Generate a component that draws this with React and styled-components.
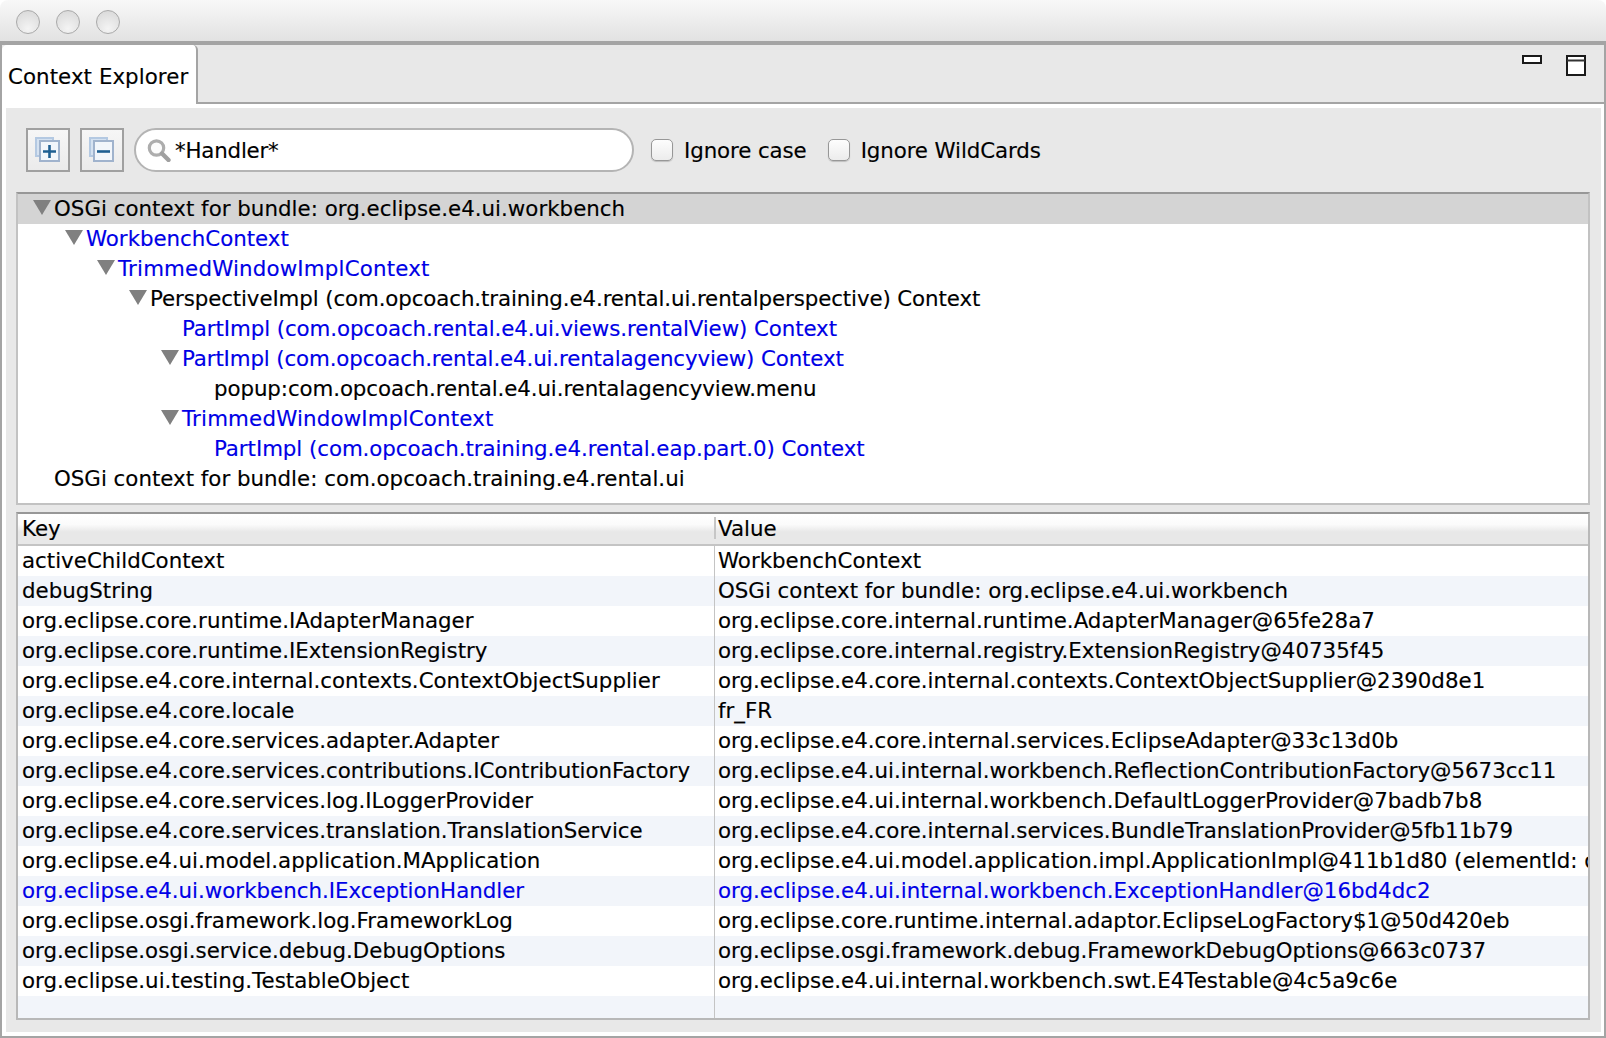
import React from 'react';
import styled, { createGlobalStyle } from 'styled-components';

const GlobalStyle = createGlobalStyle`
  html, body {
    margin: 0;
    padding: 0;
    background: #ffffff;
  }
  body {
    font-family: "DejaVu Sans", "Liberation Sans", sans-serif;
    font-size: 21.35px;
    color: #000;
    -webkit-text-stroke: 0.15px currentColor;
  }
`;

const Window = styled.div`
  width: 1606px;
  height: 1038px;
  display: flex;
  flex-direction: column;
  overflow: hidden;
  background: #fff;
`;

const TitleBar = styled.div`
  height: 41px;
  flex: none;
  display: flex;
  align-items: center;
  gap: 16px;
  padding: 3px 0 0 16px;
  box-sizing: border-box;
  border-radius: 8px 8px 0 0;
  background: linear-gradient(#f8f8f8, #e2e2e2);
`;

const Light = styled.span`
  width: 24px;
  height: 24px;
  box-sizing: border-box;
  border-radius: 50%;
  border: 1px solid #a9a9a9;
  background: radial-gradient(circle at 50% 80%, #f4f4f4, #d6d6d6);
`;

const Frame = styled.div`
  flex: 1;
  display: flex;
  flex-direction: column;
  box-sizing: border-box;
  border: 2px solid #a4a4a4;
  border-top-width: 4px;
  background: #fff;
  min-height: 0;
`;

const TabStrip = styled.div`
  height: 59px;
  flex: none;
  display: flex;
  background: #e8e8e8;
`;

const Tab = styled.div`
  width: 196px;
  box-sizing: border-box;
  padding: 19px 0 0 6px;
  background: #fff;
  border-right: 2px solid #a4a4a4;
  border-radius: 5px 5px 0 0;
  white-space: nowrap;
  letter-spacing: 0.06px;
`;

const TabFill = styled.div`
  flex: 1;
  display: flex;
  justify-content: flex-end;
  align-items: flex-start;
  gap: 24px;
  padding: 10px 18px 0 0;
  border-bottom: 2px solid #a4a4a4;
`;

const ViewButton = styled.svg`
  display: block;
  flex: none;
`;

const Panel = styled.div`
  flex: 1;
  margin: 4px 3px 4px 4px;
  padding: 20px 11px 12px 10px;
  display: flex;
  flex-direction: column;
  background: #e8e8e8;
  min-height: 0;
`;

const Toolbar = styled.div`
  height: 44px;
  flex: none;
  margin-left: 10px;
  display: flex;
  align-items: center;
`;

const ToolButton = styled.button`
  width: 44px;
  height: 44px;
  padding: 0;
  margin-right: 10px;
  display: flex;
  align-items: center;
  justify-content: center;
  box-sizing: border-box;
  border: 2px solid #a0a0a0;
  background: linear-gradient(#f6f6f6, #ebebeb);
`;

const SearchBox = styled.div`
  width: 500px;
  height: 44px;
  box-sizing: border-box;
  margin-right: 17px;
  padding-left: 11px;
  display: flex;
  align-items: center;
  gap: 4px;
  background: #fff;
  border: 2px solid #b4b4b4;
  border-radius: 22px;
`;

const SearchText = styled.span`
  letter-spacing: -0.2px;
`;

const CheckLabel = styled.label`
  display: flex;
  align-items: center;
  margin-right: 21px;
  white-space: nowrap;
  letter-spacing: -0.1px;
`;

const CheckBox = styled.span`
  width: 22px;
  height: 22px;
  margin-right: 11px;
  box-sizing: border-box;
  border: 1px solid #979797;
  border-radius: 5px;
  background: linear-gradient(#fdfdfd, #ececec);
  box-shadow: 0 1px 1px rgba(0, 0, 0, 0.18);
`;

const Tree = styled.div`
  height: 313px;
  flex: none;
  margin-top: 20px;
  box-sizing: border-box;
  background: #fff;
  border: 2px solid #c2c2c2;
  border-top-color: #979797;
`;

const TreeRow = styled.div`
  height: 30px;
  display: flex;
  align-items: center;
  box-sizing: border-box;
  padding: 0 0 2px ${(p) => 36 + p.$depth * 32}px;
  position: relative;
  white-space: nowrap;
  letter-spacing: ${(p) => p.$track || 0}px;
  color: ${(p) => (p.$link ? '#0000e6' : '#000')};
  background: ${(p) => (p.$selected ? '#d4d4d4' : 'transparent')};
`;

const Twisty = styled.span`
  position: absolute;
  left: ${(p) => 15 + p.$depth * 32}px;
  top: 6px;
  width: 0;
  height: 0;
  border-left: 9px solid transparent;
  border-right: 9px solid transparent;
  border-top: 15px solid #808080;
`;

const Table = styled.div`
  height: 508px;
  flex: none;
  margin-top: 7px;
  box-sizing: border-box;
  display: flex;
  flex-direction: column;
  overflow: hidden;
  background: #f2f5fa;
  border: 2px solid #b8b8b8;
  border-top-color: #979797;
`;

const Row = styled.div`
  height: 30px;
  flex: none;
  display: grid;
  grid-template-columns: 696px 1fr;
  background: ${(p) => (p.$alt ? '#f2f5fa' : '#fff')};
  color: ${(p) => (p.$link ? '#0000e6' : '#000')};
`;

const HeadRow = styled(Row)`
  height: 32px;
  box-sizing: border-box;
  border-bottom: 2px solid #c4c4c4;
  background: linear-gradient(#fff 0, #fbfbfb 35%, #e8e8e8 60%, #e8e8e8 100%);
`;

const Cell = styled.div`
  display: flex;
  align-items: center;
  padding: 0 0 2px 4px;
  white-space: nowrap;
  overflow: hidden;
  box-sizing: border-box;
`;

const HeadCell = styled(Cell)`
  padding-left: ${(p) => (p.$second ? '0' : '4px')};
`;

const HeadDivider = styled.span`
  width: 2px;
  height: 22px;
  margin-right: 2px;
  flex: none;
  background: #c6c6c6;
`;

const BodyFill = styled.div`
  flex: 1;
  display: grid;
  grid-template-columns: 696px 1fr;
`;

const ValueCell = styled(Cell)`
  padding-left: 3px;
  border-left: 1px solid #c4c4c4;
`;

const treeRows = [
  { depth: 0, open: true, selected: true, track: 0.02, text: 'OSGi context for bundle: org.eclipse.e4.ui.workbench' },
  { depth: 1, open: true, link: true, track: -0.02, text: 'WorkbenchContext' },
  { depth: 2, open: true, link: true, track: 0.18, text: 'TrimmedWindowImplContext' },
  { depth: 3, open: true, track: -0.11, text: 'PerspectiveImpl (com.opcoach.training.e4.rental.ui.rentalperspective) Context' },
  { depth: 4, link: true, track: -0.09, text: 'PartImpl (com.opcoach.rental.e4.ui.views.rentalView) Context' },
  { depth: 4, open: true, link: true, track: -0.13, text: 'PartImpl (com.opcoach.rental.e4.ui.rentalagencyview) Context' },
  { depth: 5, track: -0.09, text: 'popup:com.opcoach.rental.e4.ui.rentalagencyview.menu' },
  { depth: 4, open: true, link: true, track: 0.18, text: 'TrimmedWindowImplContext' },
  { depth: 5, link: true, track: -0.06, text: 'PartImpl (com.opcoach.training.e4.rental.eap.part.0) Context' },
  { depth: 0, text: 'OSGi context for bundle: com.opcoach.training.e4.rental.ui' },
];

const tableRows = [
  ['activeChildContext', 'WorkbenchContext'],
  ['debugString', 'OSGi context for bundle: org.eclipse.e4.ui.workbench'],
  ['org.eclipse.core.runtime.IAdapterManager', 'org.eclipse.core.internal.runtime.AdapterManager@65fe28a7'],
  ['org.eclipse.core.runtime.IExtensionRegistry', 'org.eclipse.core.internal.registry.ExtensionRegistry@40735f45'],
  ['org.eclipse.e4.core.internal.contexts.ContextObjectSupplier', 'org.eclipse.e4.core.internal.contexts.ContextObjectSupplier@2390d8e1'],
  ['org.eclipse.e4.core.locale', 'fr_FR'],
  ['org.eclipse.e4.core.services.adapter.Adapter', 'org.eclipse.e4.core.internal.services.EclipseAdapter@33c13d0b'],
  ['org.eclipse.e4.core.services.contributions.IContributionFactory', 'org.eclipse.e4.ui.internal.workbench.ReflectionContributionFactory@5673cc11'],
  ['org.eclipse.e4.core.services.log.ILoggerProvider', 'org.eclipse.e4.ui.internal.workbench.DefaultLoggerProvider@7badb7b8'],
  ['org.eclipse.e4.core.services.translation.TranslationService', 'org.eclipse.e4.core.internal.services.BundleTranslationProvider@5fb11b79'],
  ['org.eclipse.e4.ui.model.application.MApplication', 'org.eclipse.e4.ui.model.application.impl.ApplicationImpl@411b1d80 (elementId: org.eclipse.e4'],
  ['org.eclipse.e4.ui.workbench.IExceptionHandler', 'org.eclipse.e4.ui.internal.workbench.ExceptionHandler@16bd4dc2', true],
  ['org.eclipse.osgi.framework.log.FrameworkLog', 'org.eclipse.core.runtime.internal.adaptor.EclipseLogFactory$1@50d420eb'],
  ['org.eclipse.osgi.service.debug.DebugOptions', 'org.eclipse.osgi.framework.debug.FrameworkDebugOptions@663c0737'],
  ['org.eclipse.ui.testing.TestableObject', 'org.eclipse.e4.ui.internal.workbench.swt.E4Testable@4c5a9c6e'],
];

const PagesIcon = ({ minus }) => (
  <svg width="26" height="26" viewBox="0 0 26 26" style={{ display: 'block' }}>
    <rect x="1" y="1" width="17" height="18" fill="#d5e2f1" stroke="#b4c9e2" strokeWidth="2" />
    <rect x="5" y="4" width="19" height="20" fill="#f2f6fb" stroke="#a0b3cd" strokeWidth="2" />
    <path d={minus ? 'M8 14.5h13' : 'M8 14.5h13M14.5 8v13'} stroke="#1e5f92" strokeWidth="2.6" fill="none" />
  </svg>
);

const SearchIcon = () => (
  <svg width="24" height="24" viewBox="0 0 24 24" style={{ display: 'block', flex: 'none' }}>
    <circle cx="9.5" cy="10" r="7.2" fill="#fcfcfc" stroke="#adadad" strokeWidth="3.2" />
    <path d="M15 15.5l6.5 6.5" stroke="#a0a0a0" strokeWidth="4.4" strokeLinecap="round" />
  </svg>
);

export default function App() {
  return (
    <Window>
      <GlobalStyle />
      <TitleBar>
        <Light />
        <Light />
        <Light />
      </TitleBar>
      <Frame>
        <TabStrip>
          <Tab>Context Explorer</Tab>
          <TabFill>
            <ViewButton width="20" height="10" viewBox="0 0 20 10">
              <rect x="1" y="1" width="18" height="7" fill="#fff" stroke="#1a1a1a" strokeWidth="2" />
            </ViewButton>
            <ViewButton width="20" height="21" viewBox="0 0 20 21">
              <rect x="1" y="1" width="18" height="19" fill="#fff" stroke="#1a1a1a" strokeWidth="2" />
              <path d="M1 5.5h18" stroke="#333" strokeWidth="2" />
            </ViewButton>
          </TabFill>
        </TabStrip>
        <Panel>
          <Toolbar>
            <ToolButton><PagesIcon /></ToolButton>
            <ToolButton><PagesIcon minus /></ToolButton>
            <SearchBox>
              <SearchIcon />
              <SearchText>*Handler*</SearchText>
            </SearchBox>
            <CheckLabel><CheckBox />Ignore case</CheckLabel>
            <CheckLabel><CheckBox />Ignore WildCards</CheckLabel>
          </Toolbar>
          <Tree>
            {treeRows.map((r, i) => (
              <TreeRow key={i} $depth={r.depth} $link={r.link} $selected={r.selected} $track={r.track}>
                {r.open && <Twisty $depth={r.depth} />}
                {r.text}
              </TreeRow>
            ))}
          </Tree>
          <Table>
            <HeadRow>
              <HeadCell>Key</HeadCell>
              <HeadCell $second><HeadDivider />Value</HeadCell>
            </HeadRow>
            {tableRows.map((r, i) => (
              <Row key={i} $alt={i % 2 === 1} $link={r[2]}>
                <Cell>{r[0]}</Cell>
                <ValueCell>{r[1]}</ValueCell>
              </Row>
            ))}
            <BodyFill>
              <Cell />
              <ValueCell />
            </BodyFill>
          </Table>
        </Panel>
      </Frame>
    </Window>
  );
}
